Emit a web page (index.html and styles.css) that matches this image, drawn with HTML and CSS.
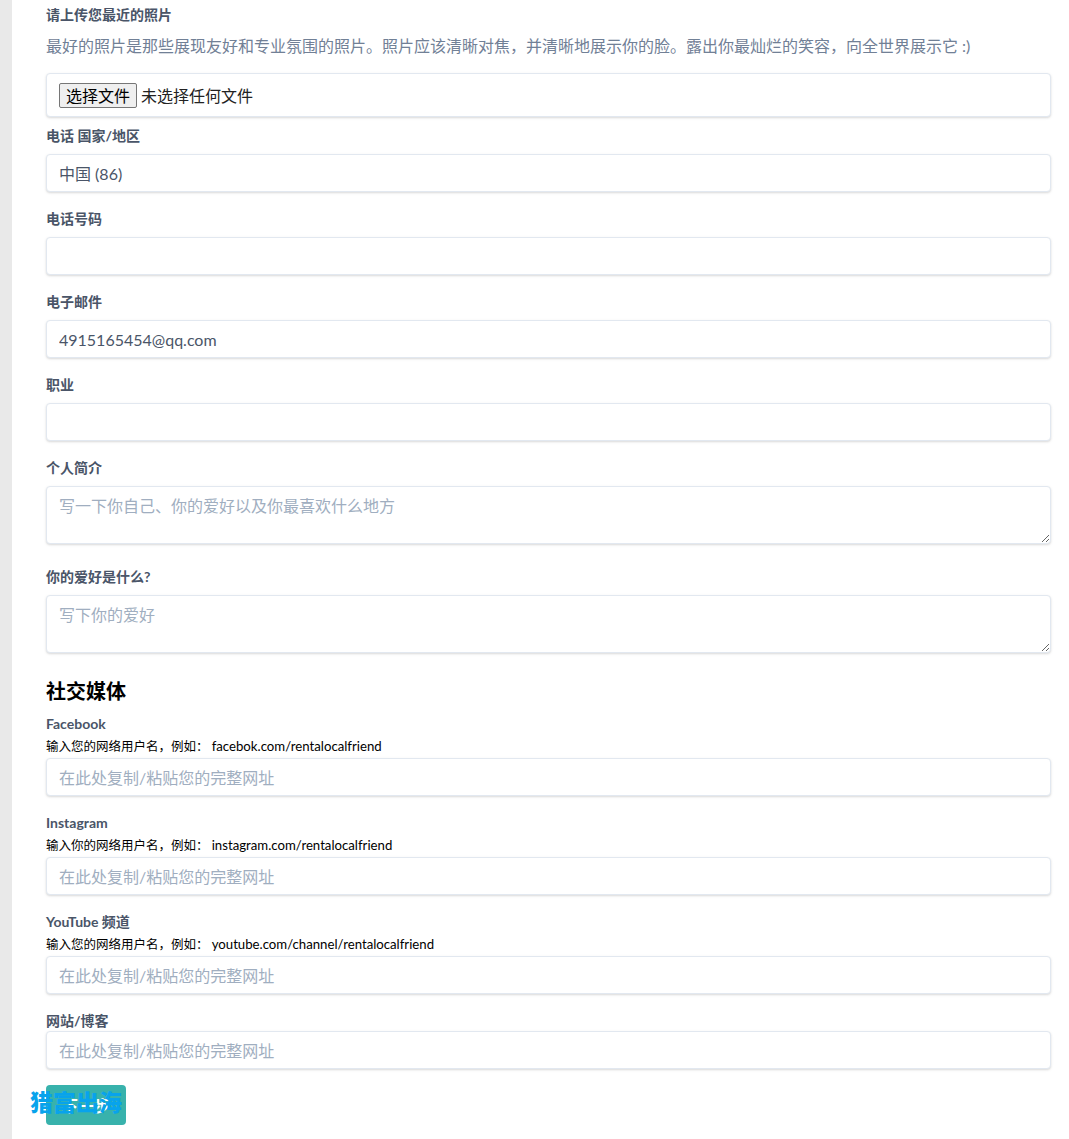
FILE: index.html
```html
<!DOCTYPE html>
<html lang="zh-CN">
  <head>
    <meta charset="UTF-8" />
    <meta name="viewport" content="width=device-width, initial-scale=1.0" />
    <title>个人资料</title>
    <link rel="stylesheet" href="styles.css">
  </head>
  <body>
    <div class="page">
      <form class="profile-form">
        <div class="field field-photo">
          <label class="field-label">请上传您最近的照片</label>
          <p class="field-desc">最好的照片是那些展现友好和专业氛围的照片。照片应该清晰对焦，并清晰地展示你的脸。露出你最灿烂的笑容，向全世界展示它 :)</p>
          <label class="file-box">
            <span class="file-btn">选择文件</span>
            <span class="file-name">未选择任何文件</span>
          </label>
        </div>

        <div class="field">
          <label class="field-label">电话 国家/地区</label>
          <input class="text-input" type="text" value="中国 (86)" />
        </div>

        <div class="field">
          <label class="field-label">电话号码</label>
          <input class="text-input" type="text" />
        </div>

        <div class="field">
          <label class="field-label">电子邮件</label>
          <input class="text-input" type="text" value="4915165454@qq.com" />
        </div>

        <div class="field">
          <label class="field-label">职业</label>
          <input class="text-input" type="text" />
        </div>

        <div class="field field-area">
          <label class="field-label">个人简介</label>
          <textarea class="text-area" placeholder="写一下你自己、你的爱好以及你最喜欢什么地方"></textarea>
        </div>

        <div class="field field-area">
          <label class="field-label">你的爱好是什么?</label>
          <textarea class="text-area" placeholder="写下你的爱好"></textarea>
        </div>

        <h2 class="section-title">社交媒体</h2>

        <div class="field">
          <label class="field-label">Facebook</label>
          <p class="field-help">输入您的网络用户名，例如： <span class="help-url">facebok.com/rentalocalfriend</span></p>
          <input class="text-input" type="text" placeholder="在此处复制/粘贴您的完整网址" />
        </div>

        <div class="field">
          <label class="field-label">Instagram</label>
          <p class="field-help">输入你的网络用户名，例如： <span class="help-url">instagram.com/rentalocalfriend</span></p>
          <input class="text-input" type="text" placeholder="在此处复制/粘贴您的完整网址" />
        </div>

        <div class="field">
          <label class="field-label">YouTube 频道</label>
          <p class="field-help">输入您的网络用户名，例如： <span class="help-url">youtube.com/channel/rentalocalfriend</span></p>
          <input class="text-input" type="text" placeholder="在此处复制/粘贴您的完整网址" />
        </div>

        <div class="field field-last">
          <label class="field-label field-label-tight">网站/博客</label>
          <input class="text-input" type="text" placeholder="在此处复制/粘贴您的完整网址" />
        </div>

        <div class="actions">
          <button class="next-btn" type="button">下一步</button>
          <span class="watermark">猎富出海</span>
        </div>
      </form>
    </div>
  </body>
</html>
```

FILE: styles.css
```css
* {
  box-sizing: border-box;
}

body {
  margin: 0;
  background: #fff;
  font-family: Lato, 'Noto Sans CJK SC', sans-serif;
  color: #4a5568;
}

.page {
  min-height: 100vh;
  border-left: 12px solid #e9e9e9;
  padding: 6px 18px 14px 34px;
}

p {
  margin: 0;
}

.field {
  margin-bottom: 18px;
}

.field-area {
  margin-bottom: 24px;
}

.field-photo {
  margin-bottom: 10px;
}

.field-last {
  margin-bottom: 16px;
}

.field-label {
  display: block;
  margin-bottom: 9px;
  font-size: 14px;
  line-height: 18px;
  font-weight: 700;
  color: #4a5568;
}

.field-label-tight {
  margin-bottom: 1px;
}

.field-desc {
  margin-top: 10px;
  margin-bottom: 15px;
  font-size: 16px;
  line-height: 24px;
  color: #718096;
}

.field-help {
  height: 18px;
  margin-top: -4px;
  margin-bottom: 2px;
  font-size: 12.5px;
  line-height: 18px;
  color: #000;
  white-space: nowrap;
}

.help-url {
  font-size: 13.2px;
  line-height: 1;
}

.file-box,
.text-input,
.text-area {
  display: block;
  width: 100%;
  border: 1px solid #e2e8f0;
  border-radius: 4px;
  background: #fff;
  box-shadow: 0 1px 3px rgba(0, 0, 0, 0.1), 0 1px 2px rgba(0, 0, 0, 0.06);
}

.file-box {
  display: flex;
  align-items: center;
  height: 44px;
  padding: 0 12px;
  font-family: 'Noto Sans CJK SC', sans-serif;
  font-size: 16px;
  color: #222;
}

.file-btn {
  display: inline-block;
  height: 25px;
  padding: 0 6px;
  margin-right: 4px;
  border: 1px solid #767676;
  border-radius: 2px;
  background: #efefef;
  line-height: 23px;
  color: #000;
}

.text-input {
  height: 38px;
  padding: 0 12px;
  font-family: Lato, 'Noto Sans CJK SC', sans-serif;
  font-size: 16px;
  color: #4a5568;
}

.text-area {
  height: 58px;
  padding: 8px 12px;
  font-family: Lato, 'Noto Sans CJK SC', sans-serif;
  font-size: 16px;
  line-height: 22px;
  color: #4a5568;
}

.text-input::placeholder,
.text-area::placeholder {
  color: #a0aec0;
}

.section-title {
  margin: 0 0 10px;
  font-size: 20px;
  line-height: 28px;
  font-weight: 700;
  color: #000;
}

.actions {
  position: relative;
}

.next-btn {
  height: 40px;
  width: 80px;
  border: 0;
  border-radius: 4px;
  background: #38b2ac;
  color: #fff;
  font-family: Lato, 'Noto Sans CJK SC', sans-serif;
  font-size: 16px;
  font-weight: 700;
}

.watermark {
  position: absolute;
  left: -16px;
  top: 1px;
  font-family: 'Noto Sans CJK SC', sans-serif;
  font-size: 23px;
  font-weight: 900;
  line-height: 30px;
  color: #08a3ec;
}
```
